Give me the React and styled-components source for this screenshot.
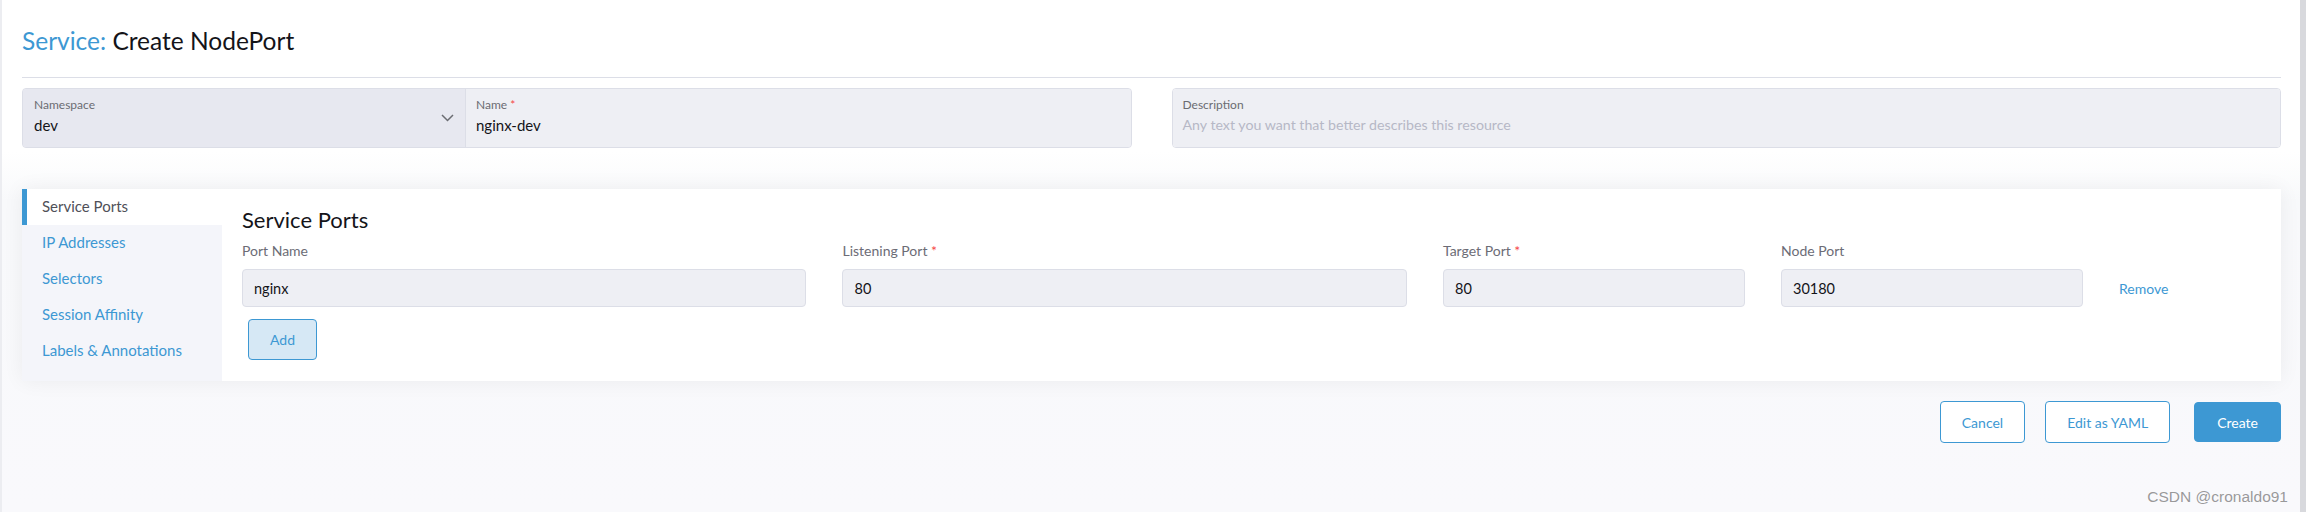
import React from "react";
import styled, { createGlobalStyle } from "styled-components";

const GlobalStyle = createGlobalStyle`
  html, body {
    margin: 0;
    padding: 0;
  }
  body {
    font-family: Lato, "Noto Sans", sans-serif;
    color: #141419;
    background: #ffffff;
  }
  * {
    box-sizing: border-box;
  }
`;

const tabs = [
  "Service Ports",
  "IP Addresses",
  "Selectors",
  "Session Affinity",
  "Labels & Annotations",
];

const ports = [
  { label: "Port Name", value: "nginx" },
  { label: "Listening Port", value: "80", required: true },
  { label: "Target Port", value: "80", required: true },
  { label: "Node Port", value: "30180" },
];

export default function App() {
  return (
    <Page>
      <GlobalStyle />
      <Title>
        <span>Service:</span> Create NodePort
      </Title>
      <Rule />
      <TopRow>
        <Group>
          <LabeledBox $select>
            <BoxText>
              <BoxLabel>Namespace</BoxLabel>
              <BoxValue>dev</BoxValue>
            </BoxText>
            <svg width="13" height="8" viewBox="0 0 13 8">
              <polyline
                points="1,1 6.5,6.5 12,1"
                fill="none"
                stroke="#6b6c72"
                strokeWidth="1.5"
              />
            </svg>
          </LabeledBox>
          <LabeledBox>
            <BoxText>
              <BoxLabel>
                Name <Req>*</Req>
              </BoxLabel>
              <BoxValue>nginx-dev</BoxValue>
            </BoxText>
          </LabeledBox>
        </Group>
        <Group>
          <LabeledBox>
            <BoxText>
              <BoxLabel>Description</BoxLabel>
              <BoxValue $placeholder>
                Any text you want that better describes this resource
              </BoxValue>
            </BoxText>
          </LabeledBox>
        </Group>
      </TopRow>

      <Card>
        <SideTabs>
          {tabs.map((t, i) => (
            <Tab key={t} $active={i === 0}>
              {t}
            </Tab>
          ))}
        </SideTabs>
        <CardBody>
          <Heading>Service Ports</Heading>
          <PortGrid>
            {ports.map((p) => (
              <Field key={p.label}>
                <FieldLabel>
                  {p.label} {p.required && <Req>*</Req>}
                </FieldLabel>
                <Input readOnly value={p.value} />
              </Field>
            ))}
            <RemoveCell>
              <LinkButton>Remove</LinkButton>
            </RemoveCell>
          </PortGrid>
          <AddButton>Add</AddButton>
        </CardBody>
      </Card>

      <Footer>
        <Button>Cancel</Button>
        <Button>Edit as YAML</Button>
        <Button $primary>Create</Button>
      </Footer>

      <Watermark>CSDN @cronaldo91</Watermark>
    </Page>
  );
}

const Page = styled.div`
  position: relative;
  height: 512px;
  padding: 26px 19px 0 20px;
  border-left: 2px solid #ecedf1;
  border-right: 6px solid #d8d9dd;
  background: linear-gradient(
    #ffffff 0,
    #ffffff 152px,
    #f8f9fb 200px,
    #f9f9fc 100%
  );
  overflow: hidden;
`;

const Title = styled.h1`
  margin: 0;
  font-size: 24.5px;
  font-weight: 400;
  line-height: 29px;
  color: #141419;

  span {
    color: #3d98d3;
  }
`;

const Rule = styled.div`
  height: 1px;
  margin-top: 22px;
  background: #dcdee7;
`;

const TopRow = styled.div`
  display: grid;
  grid-template-columns: 1fr 1fr;
  gap: 40px;
  margin-top: 10px;
`;

const Group = styled.div`
  display: flex;
  height: 60px;
  border: 1px solid #dcdee7;
  border-radius: 4px;
  overflow: hidden;
  background: #eeeff4;
`;

const LabeledBox = styled.div`
  display: flex;
  align-items: center;
  flex: ${(p) => (p.$select ? "0 0 40%" : "1 1 auto")};
  padding: 0 11px 0 ${(p) => (p.$select ? "11px" : "10px")};
  background: ${(p) => (p.$select ? "#e7e8f0" : "#eeeff4")};
  border-right: ${(p) => (p.$select ? "1px solid #dcdee7" : "none")};
`;

const BoxText = styled.div`
  flex: 1;
  display: flex;
  flex-direction: column;
  padding-bottom: 4px;
`;

const BoxLabel = styled.div`
  font-size: 12px;
  line-height: 14px;
  color: #6b6c72;
`;

const BoxValue = styled.div`
  margin-top: 4px;
  font-size: ${(p) => (p.$placeholder ? "14.2px" : "15px")};
  line-height: 18px;
  color: ${(p) => (p.$placeholder ? "#b6b8c6" : "#141419")};
`;

const Req = styled.span`
  color: #f64747;
`;

const Card = styled.div`
  display: flex;
  margin-top: 41px;
  height: 192px;
  background: #ffffff;
  box-shadow: 0 0 20px rgba(0, 0, 0, 0.06);
`;

const SideTabs = styled.div`
  flex: 0 0 200px;
  display: flex;
  flex-direction: column;
  background: #f4f5fa;
`;

const Tab = styled.div`
  height: 36px;
  display: flex;
  align-items: center;
  padding: 0 0 2px 15px;
  border-left: 5px solid ${(p) => (p.$active ? "#3d98d3" : "transparent")};
  background: ${(p) => (p.$active ? "#ffffff" : "transparent")};
  font-size: 15px;
  color: ${(p) => (p.$active ? "#4f5058" : "#3d98d3")};
`;

const CardBody = styled.div`
  flex: 1;
  padding: 18px 20px 21px 20px;
`;

const Heading = styled.h3`
  margin: 0 0 8px;
  font-size: 22px;
  font-weight: 400;
  line-height: 26px;
  color: #141419;
`;

const PortGrid = styled.div`
  display: grid;
  grid-template-columns: 2fr 2fr 1.07fr 1.07fr 142px;
  column-gap: 36px;
`;

const Field = styled.div`
  display: flex;
  flex-direction: column;
`;

const FieldLabel = styled.div`
  margin-bottom: 8px;
  font-size: 14px;
  line-height: 20px;
  color: #6c6c76;
`;

const Input = styled.input`
  height: 38px;
  padding: 0 11px;
  border: 1px solid #dcdee7;
  border-radius: 4px;
  background: #eeeff4;
  font-family: Lato, "Noto Sans", sans-serif;
  font-size: 14.5px;
  color: #141419;
  outline: none;
`;

const RemoveCell = styled.div`
  align-self: end;
  height: 38px;
  display: flex;
  align-items: center;
`;

const LinkButton = styled.span`
  font-size: 14px;
  color: #3d98d3;
`;

const AddButton = styled.button`
  display: block;
  margin: 12px 0 0 6px;
  width: 69px;
  height: 41px;
  border: 1px solid #3d98d3;
  border-radius: 4px;
  background: #d6e8f5;
  color: #3d98d3;
  font-family: Lato, "Noto Sans", sans-serif;
  font-size: 14px;
`;

const Footer = styled.div`
  display: flex;
  justify-content: flex-end;
  align-items: center;
  gap: 20px;
  margin-top: 20px;
`;

const Button = styled.button`
  height: ${(p) => (p.$primary ? "40px" : "42px")};
  margin-left: ${(p) => (p.$primary ? "4px" : "0")};
  padding: 0 ${(p) => (p.$primary ? "22px" : "21px")};
  border: 1px solid #3d98d3;
  border-radius: 4px;
  background: ${(p) => (p.$primary ? "#3d98d3" : "#ffffff")};
  color: ${(p) => (p.$primary ? "#ffffff" : "#3d98d3")};
  font-family: Lato, "Noto Sans", sans-serif;
  font-size: 14px;
`;

const Watermark = styled.div`
  position: absolute;
  right: 12px;
  bottom: 6px;
  font-family: "Liberation Sans", Arial, sans-serif;
  font-size: 15.5px;
  color: rgba(110, 110, 110, 0.7);
`;
